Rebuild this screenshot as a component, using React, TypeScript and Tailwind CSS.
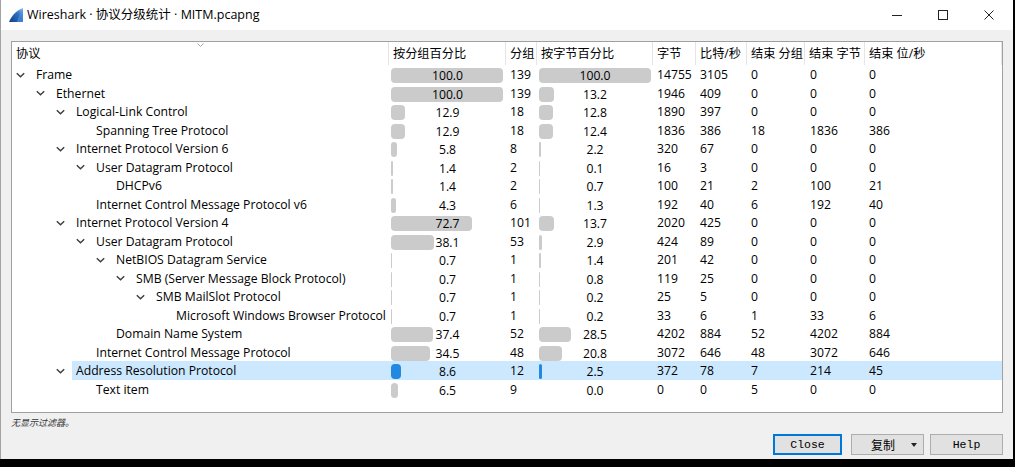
import React from "react";

type Row = {
  d: number;
  name: string;
  exp: boolean;
  p1: string;
  n: string;
  p2: string;
  b: string;
  bps: string;
  ep: string;
  eb: string;
  ebps: string;
  sel?: boolean;
};

const rows: Row[] = [
  { d: 0, name: "Frame", exp: true, p1: "100.0", n: "139", p2: "100.0", b: "14755", bps: "3105", ep: "0", eb: "0", ebps: "0" },
  { d: 1, name: "Ethernet", exp: true, p1: "100.0", n: "139", p2: "13.2", b: "1946", bps: "409", ep: "0", eb: "0", ebps: "0" },
  { d: 2, name: "Logical-Link Control", exp: true, p1: "12.9", n: "18", p2: "12.8", b: "1890", bps: "397", ep: "0", eb: "0", ebps: "0" },
  { d: 3, name: "Spanning Tree Protocol", exp: false, p1: "12.9", n: "18", p2: "12.4", b: "1836", bps: "386", ep: "18", eb: "1836", ebps: "386" },
  { d: 2, name: "Internet Protocol Version 6", exp: true, p1: "5.8", n: "8", p2: "2.2", b: "320", bps: "67", ep: "0", eb: "0", ebps: "0" },
  { d: 3, name: "User Datagram Protocol", exp: true, p1: "1.4", n: "2", p2: "0.1", b: "16", bps: "3", ep: "0", eb: "0", ebps: "0" },
  { d: 4, name: "DHCPv6", exp: false, p1: "1.4", n: "2", p2: "0.7", b: "100", bps: "21", ep: "2", eb: "100", ebps: "21" },
  { d: 3, name: "Internet Control Message Protocol v6", exp: false, p1: "4.3", n: "6", p2: "1.3", b: "192", bps: "40", ep: "6", eb: "192", ebps: "40" },
  { d: 2, name: "Internet Protocol Version 4", exp: true, p1: "72.7", n: "101", p2: "13.7", b: "2020", bps: "425", ep: "0", eb: "0", ebps: "0" },
  { d: 3, name: "User Datagram Protocol", exp: true, p1: "38.1", n: "53", p2: "2.9", b: "424", bps: "89", ep: "0", eb: "0", ebps: "0" },
  { d: 4, name: "NetBIOS Datagram Service", exp: true, p1: "0.7", n: "1", p2: "1.4", b: "201", bps: "42", ep: "0", eb: "0", ebps: "0" },
  { d: 5, name: "SMB (Server Message Block Protocol)", exp: true, p1: "0.7", n: "1", p2: "0.8", b: "119", bps: "25", ep: "0", eb: "0", ebps: "0" },
  { d: 6, name: "SMB MailSlot Protocol", exp: true, p1: "0.7", n: "1", p2: "0.2", b: "25", bps: "5", ep: "0", eb: "0", ebps: "0" },
  { d: 7, name: "Microsoft Windows Browser Protocol", exp: false, p1: "0.7", n: "1", p2: "0.2", b: "33", bps: "6", ep: "1", eb: "33", ebps: "6" },
  { d: 4, name: "Domain Name System", exp: false, p1: "37.4", n: "52", p2: "28.5", b: "4202", bps: "884", ep: "52", eb: "4202", ebps: "884" },
  { d: 3, name: "Internet Control Message Protocol", exp: false, p1: "34.5", n: "48", p2: "20.8", b: "3072", bps: "646", ep: "48", eb: "3072", ebps: "646" },
  { d: 2, name: "Address Resolution Protocol", exp: true, p1: "8.6", n: "12", p2: "2.5", b: "372", bps: "78", ep: "7", eb: "214", ebps: "45", sel: true },
  { d: 3, name: "Text item", exp: false, p1: "6.5", n: "9", p2: "0.0", b: "0", bps: "0", ep: "5", eb: "0", ebps: "0" },
];

const FONT = { fontFamily: '"Open Sans","Noto Sans CJK SC",sans-serif' };

function Chevron() {
  return (
    <svg width="9" height="6" viewBox="0 0 9 6" className="shrink-0">
      <polyline points="0.8,1.2 4.5,4.8 8.2,1.2" fill="none" stroke="#3c3c3c" strokeWidth="1.4" />
    </svg>
  );
}

function BarCell({ pct, w, sel }: { pct: string; w: string; sel?: boolean }) {
  const v = parseFloat(pct);
  return (
    <div className={`${w} grid items-center h-full`}>
      {v > 0 && (
        <div
          className={`[grid-area:1/1] ml-[2px] mt-[1px] h-[15px] rounded-[4px] ${sel ? "bg-[#2388e0]" : "bg-[#cbcbcb]"}`}
          style={{ width: `${(v * 112) / 100}px` }}
        />
      )}
      <div className="[grid-area:1/1] text-center pt-[2px]">{pct}</div>
    </div>
  );
}

function TitleIcon() {
  return (
    <svg width="16" height="16" viewBox="0 0 16 16">
      <defs>
        <linearGradient id="fin" x1="0" y1="1" x2="1" y2="0">
          <stop offset="0" stopColor="#123f86" />
          <stop offset="0.6" stopColor="#2d6fc2" />
          <stop offset="1" stopColor="#8cc2f0" />
        </linearGradient>
      </defs>
      <path d="M1 15 C3 10 7 4 15 1 L15 15 Z" fill="url(#fin)" />
      <path d="M9 15 C10 10 12 6 15 3 L15 15 Z" fill="#4f95da" opacity="0.6" />
    </svg>
  );
}

const W = {
  c1: "w-[377px]",
  c2: "w-[117px]",
  c3: "w-[31px]",
  c4: "w-[116px]",
  c5: "w-[43px]",
  c6: "w-[51px]",
  c7: "w-[58px]",
  c8: "w-[60px]",
  c9: "w-[137px]",
};

const cell = "flex items-center pt-[2px]";

export default function App() {
  return (
    <div className="w-[1015px] h-[467px] bg-black text-[12.2px] text-black overflow-hidden" style={FONT}>
      <div className="w-[1013px] h-[459px] flex flex-col border-l border-[#a3a3a3] bg-[#f0f0f0]">
        {/* Title bar */}
        <div className="h-[30px] bg-white flex items-center shrink-0">
          <div className="ml-[7px] mt-[-1px]">
            <TitleIcon />
          </div>
          <div className="ml-[3px] text-[12.5px] leading-none">Wireshark · 协议分级统计 · MITM.pcapng</div>
          <div className="ml-auto flex items-center h-full">
            <div className="w-[46px] h-full flex items-center justify-center">
              <div className="w-[10px] h-px bg-[#222]" />
            </div>
            <div className="w-[46px] h-full flex items-center justify-center">
              <div className="w-[10px] h-[10px] border border-[#222]" />
            </div>
            <div className="w-[46px] h-full flex items-center justify-center">
              <svg width="10" height="10" viewBox="0 0 10 10">
                <path d="M0.5 0.5 L9.5 9.5 M9.5 0.5 L0.5 9.5" stroke="#222" strokeWidth="1" />
              </svg>
            </div>
            <div className="w-[1px]" />
          </div>
        </div>

        {/* Content */}
        <div className="flex-1 flex flex-col pl-[10px] pr-[10px]">
          <div className="mt-[11px] h-[372px] border border-[#a0a0a0] bg-white flex flex-col">
            {/* Header */}
            <div className="h-[23px] flex shrink-0">
              <div className={`${W.c1} grid h-full border-r border-[#e5e5e5]`}>
                <div className="[grid-area:1/1] self-start justify-self-center mt-[1px]">
                  <svg width="7" height="4" viewBox="0 0 7 4">
                    <polyline points="0.5,0.5 3.5,3.5 6.5,0.5" fill="none" stroke="#a8a8a8" strokeWidth="1" />
                  </svg>
                </div>
                <div className="[grid-area:1/1] self-center pl-[4px] pt-[2px]">协议</div>
              </div>
              <div className={`${W.c2} ${cell} pl-[4px] border-r border-[#e5e5e5]`}>按分组百分比</div>
              <div className={`${W.c3} ${cell} pl-[4px] border-r border-[#e5e5e5]`}>分组</div>
              <div className={`${W.c4} ${cell} pl-[4px] border-r border-[#e5e5e5]`}>按字节百分比</div>
              <div className={`${W.c5} ${cell} pl-[4px] border-r border-[#e5e5e5]`}>字节</div>
              <div className={`${W.c6} ${cell} pl-[4px] border-r border-[#e5e5e5]`}>比特/秒</div>
              <div className={`${W.c7} ${cell} pl-[4px] border-r border-[#e5e5e5]`}>结束 分组</div>
              <div className={`${W.c8} ${cell} pl-[4px] border-r border-[#e5e5e5]`}>结束 字节</div>
              <div className={`${W.c9} ${cell} pl-[4px] border-r border-[#e5e5e5]`}>结束 位/秒</div>
            </div>
            {/* Rows */}
            {rows.map((r, i) => (
              <div key={i} className={`h-[18.5px] flex shrink-0 ${r.sel ? "bg-[#cce8ff]" : ""}`}>
                <div className={`${W.c1} flex items-center h-full`}>
                  <div
                    className="h-full bg-white flex items-center justify-end shrink-0 pt-[1px]"
                    style={{ width: `${20 + 20 * r.d}px` }}
                  >
                    <div className="w-[20px] flex items-center">
                      {r.exp && (
                        <div className="ml-[4px]">
                          <Chevron />
                        </div>
                      )}
                    </div>
                  </div>
                  <div className="pl-[4px] pt-[2px] whitespace-nowrap">{r.name}</div>
                </div>
                <BarCell pct={r.p1} w={W.c2} sel={r.sel} />
                <div className={`${W.c3} ${cell} pl-[4px]`}>{r.n}</div>
                <BarCell pct={r.p2} w={W.c4} sel={r.sel} />
                <div className={`${W.c5} ${cell} pl-[4px]`}>{r.b}</div>
                <div className={`${W.c6} ${cell} pl-[4px]`}>{r.bps}</div>
                <div className={`${W.c7} ${cell} pl-[4px]`}>{r.ep}</div>
                <div className={`${W.c8} ${cell} pl-[5px]`}>{r.eb}</div>
                <div className={`${W.c9} ${cell} pl-[4px]`}>{r.ebps}</div>
              </div>
            ))}
          </div>

          <div className="mt-[4px] h-[12px] flex items-center text-[9px] italic text-[#333]" style={{ fontFamily: '"Noto Sans CJK SC",sans-serif' }}>
            无显示过滤器。
          </div>

          <div className="mt-[5px] flex justify-end h-[21px]">
            <div
              className="w-[69px] h-full border-2 border-[#0078d7] bg-[#e1e1e1] flex items-center justify-center text-[11.5px]"
              style={{ fontFamily: '"Liberation Mono",monospace' }}
            >
              Close
            </div>
            <div className="ml-[9px] w-[73px] h-full border border-[#adadad] bg-[#e1e1e1] flex items-center">
              <div className="ml-[19px] text-[12px]" style={{ fontFamily: '"Noto Sans CJK SC",sans-serif' }}>
                复制
              </div>
              <div className="ml-[16px] w-0 h-0 border-l-[3.5px] border-r-[3.5px] border-t-[4px] border-l-transparent border-r-transparent border-t-[#222]" />
            </div>
            <div
              className="ml-[6px] w-[73px] h-full border border-[#adadad] bg-[#e1e1e1] flex items-center justify-center text-[11.5px]"
              style={{ fontFamily: '"Liberation Mono",monospace' }}
            >
              Help
            </div>
          </div>
        </div>
      </div>
    </div>
  );
}
